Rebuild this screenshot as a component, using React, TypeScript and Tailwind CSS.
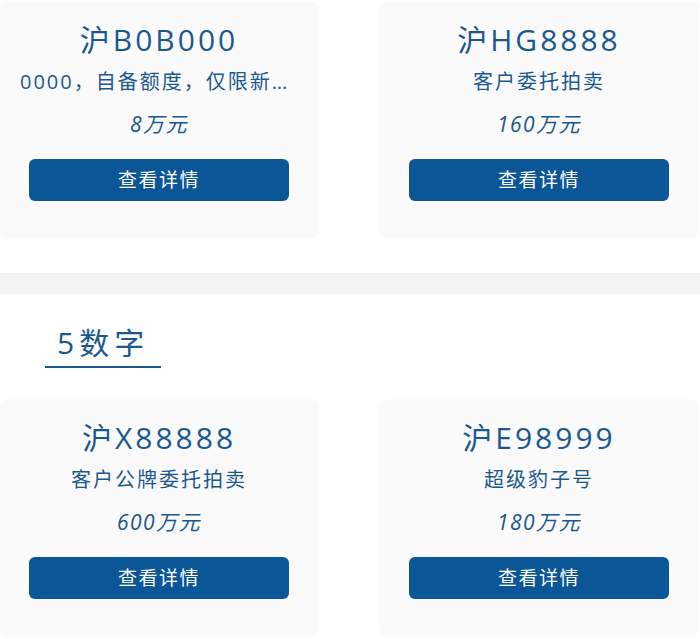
const plates = [
  { no: "沪B0B000", desc: "0000，自备额度，仅限新能源车辆使用", price: "8万元" },
  { no: "沪HG8888", desc: "客户委托拍卖", price: "160万元" },
];

const fiveDigit = [
  { no: "沪X88888", desc: "客户公牌委托拍卖", price: "600万元" },
  { no: "沪E98999", desc: "超级豹子号", price: "180万元" },
];

const font = { fontFamily: '"Open Sans", "Noto Sans CJK SC", sans-serif' };

function PlateCard({ no, desc, price }: { no: string; desc: string; price: string }) {
  return (
    <div className="w-[318px] rounded-[8px] bg-[#fafafa] shadow-[0_0_3px_rgba(0,0,0,0.04)] pt-[18px] pb-[37px] flex flex-col items-center text-[#1a5890]">
      <div className="h-[40px] leading-[40px] text-[30px] tracking-[3px]">{no}</div>
      <div className="mt-[7px] h-[30px] leading-[30px] text-[20px] tracking-[2px] w-full px-[20px] text-center truncate">
        {desc}
      </div>
      <div className="mt-[12px] h-[30px] leading-[30px] text-[21px] italic tracking-[1.5px]">{price}</div>
      <button className="mt-[20px] w-[260px] h-[42px] rounded-[6px] bg-[#0a5697] text-white text-[19px] tracking-[1.5px]">
        查看详情
      </button>
    </div>
  );
}

export default function App() {
  return (
    <div className="w-[700px] h-[639px] overflow-hidden bg-white" style={font}>
      <div className="flex gap-[62px] pt-[2px]">
        {plates.map((p) => (
          <PlateCard key={p.no} {...p} />
        ))}
      </div>

      <div className="mt-[35px] h-[21px] bg-[#f4f4f4]" />

      <div className="mt-[31px] pl-[45px]">
        <div className="inline-block px-[12px] pb-[5px] border-b-2 border-[#1a5890]">
          <span className="block h-[36px] leading-[36px] text-[30px] tracking-[5px] text-[#1a5890]">5数字</span>
        </div>
      </div>

      <div className="mt-[32px] flex gap-[62px]">
        {fiveDigit.map((p) => (
          <PlateCard key={p.no} {...p} />
        ))}
      </div>
    </div>
  );
}
